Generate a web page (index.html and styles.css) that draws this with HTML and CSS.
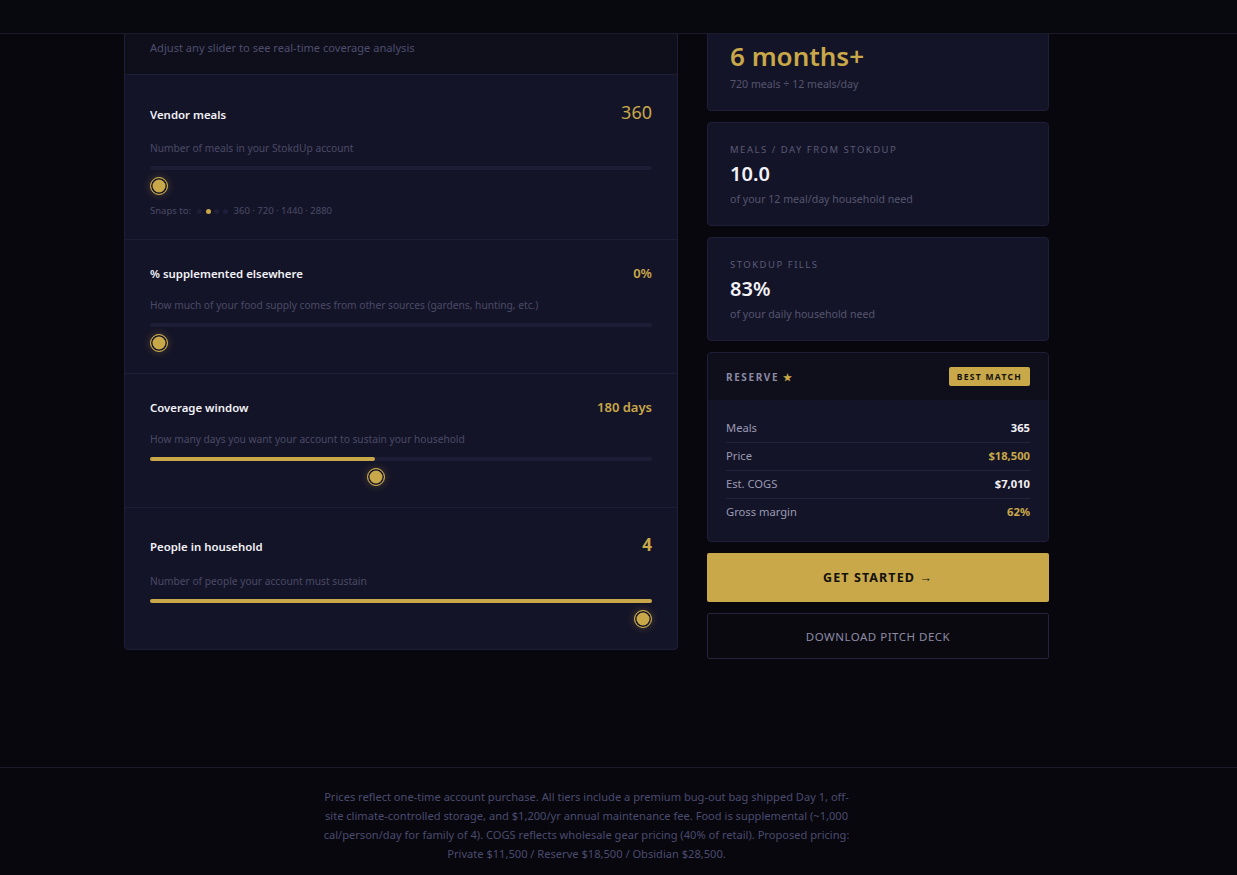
FILE: index.html
```html
<!DOCTYPE html>
<html lang="en">
<head>
    <meta charset="UTF-8">
    <meta name="viewport" content="width=device-width, initial-scale=1.0">
    <title>StokdUp Coverage Calculator</title>
    <link rel="stylesheet" href="styles.css">
</head>
<body>
    <header class="topbar"></header>

    <main class="layout">
        <section class="panel">
            <div class="panel-head">
                <h2 class="panel-title">Coverage calculator</h2>
                <p class="panel-sub">Adjust any slider to see real-time coverage analysis</p>
            </div>

            <div class="control">
                <div class="control-row">
                    <span class="control-label">Vendor meals</span>
                    <span class="control-value value-lg">360</span>
                </div>
                <p class="control-desc">Number of meals in your StokdUp account</p>
                <div class="track"><div class="track-fill" style="width:0%"></div></div>
                <div class="thumb" style="margin-left:calc(0 * (100% - 18px))"></div>
                <div class="snaps">
                    Snaps to:
                    <span class="dots"><i></i><i class="on"></i><i></i><i></i></span>
                    360 · 720 · 1440 · 2880
                </div>
            </div>

            <div class="control">
                <div class="control-row">
                    <span class="control-label">% supplemented elsewhere</span>
                    <span class="control-value">0%</span>
                </div>
                <p class="control-desc">How much of your food supply comes from other sources (gardens, hunting, etc.)</p>
                <div class="track"><div class="track-fill" style="width:0%"></div></div>
                <div class="thumb" style="margin-left:calc(0 * (100% - 18px))"></div>
            </div>

            <div class="control">
                <div class="control-row">
                    <span class="control-label">Coverage window</span>
                    <span class="control-value">180 days</span>
                </div>
                <p class="control-desc">How many days you want your account to sustain your household</p>
                <div class="track"><div class="track-fill" style="width:44.8%"></div></div>
                <div class="thumb" style="margin-left:calc(0.448 * (100% - 18px))"></div>
            </div>

            <div class="control">
                <div class="control-row">
                    <span class="control-label">People in household</span>
                    <span class="control-value value-lg value-bold">4</span>
                </div>
                <p class="control-desc">Number of people your account must sustain</p>
                <div class="track"><div class="track-fill" style="width:100%"></div></div>
                <div class="thumb" style="margin-left:calc(1 * (100% - 18px))"></div>
            </div>
        </section>

        <aside class="side">
            <div class="stat">
                <div class="stat-label">Estimated coverage</div>
                <div class="stat-value stat-gold">6 months+</div>
                <div class="stat-sub">720 meals ÷ 12 meals/day</div>
            </div>

            <div class="stat">
                <div class="stat-label">Meals / day from StokdUp</div>
                <div class="stat-value">10.0</div>
                <div class="stat-sub">of your 12 meal/day household need</div>
            </div>

            <div class="stat">
                <div class="stat-label">StokdUp fills</div>
                <div class="stat-value">83%</div>
                <div class="stat-sub">of your daily household need</div>
            </div>

            <div class="tier">
                <div class="tier-head">
                    <span class="tier-name">RESERVE <span class="star">★</span></span>
                    <span class="badge">BEST MATCH</span>
                </div>
                <div class="tier-body">
                    <div class="tier-row"><span>Meals</span><b>365</b></div>
                    <div class="tier-row"><span>Price</span><b class="gold">$18,500</b></div>
                    <div class="tier-row"><span>Est. COGS</span><b>$7,010</b></div>
                    <div class="tier-row"><span>Gross margin</span><b class="gold">62%</b></div>
                </div>
            </div>

            <button type="button" class="btn-primary">GET STARTED →</button>
            <button type="button" class="btn-ghost">DOWNLOAD PITCH DECK</button>
        </aside>
    </main>

    <footer class="footer">
        <div class="footer-inner">
            <p>Prices reflect one-time account purchase. All tiers include a premium bug-out bag shipped Day 1, off-site climate-controlled storage, and $1,200/yr annual maintenance fee. Food is supplemental (~1,000 cal/person/day for family of 4). COGS reflects wholesale gear pricing (40% of retail). Proposed pricing: Private $11,500 / Reserve $18,500 / Obsidian $28,500.</p>
        </div>
    </footer>
</body>
</html>
```

FILE: styles.css
```css
body {
    margin: 0;
    background-color: #07070d;
    color: #f0f0f6;
    font-family: "Noto Sans", "Open Sans", sans-serif;
}

/* fixed top bar, content slides under it */
.topbar {
    position: fixed;
    top: 0;
    left: 0;
    right: 0;
    height: 33px;
    background-color: #08080f;
    border-bottom: 1px solid #1b1a2c;
    z-index: 10;
}

.layout {
    display: grid;
    grid-template-columns: 554px 342px;
    gap: 29px;
    align-items: start;
    margin: 1px 0 0 124px;
}

/* left panel */
.panel {
    background-color: #141428;
    border: 1px solid #1f1e36;
    border-radius: 4px;
    overflow: hidden;
}
.panel-head {
    background-color: #0f0f1c;
    border-bottom: 1px solid #1f1e36;
    padding: 9px 25px 18px;
}
.panel-title {
    margin: 0 0 9px;
    font-size: 16px;
    line-height: 20px;
}
.panel-sub {
    margin: 0;
    font-size: 11.1px;
    line-height: 16px;
    color: #4d4d6c;
}

.control {
    padding: 23px 25px 21px;
}
.control + .control {
    border-top: 1px solid #1f1e36;
}
.control-row {
    display: flex;
    justify-content: space-between;
    align-items: baseline;
}
.control-label {
    font-size: 11.4px;
    line-height: 16px;
    font-weight: 600;
    color: #f2f2f7;
}
.control-value {
    font-size: 13px;
    line-height: 20px;
    font-weight: 600;
    color: #c9a84a;
}
.value-lg {
    font-size: 18px;
    line-height: 28px;
    font-weight: 400;
}
.value-bold {
    font-weight: 700;
    font-size: 17px;
}
.control-desc {
    margin: 14px 0 0;
    font-size: 10.2px;
    line-height: 16px;
    color: #4a4a66;
}
.track {
    margin-top: 10px;
    height: 4px;
    background-color: #1e1d36;
    border-radius: 2px;
}
.track-fill {
    height: 100%;
    background-color: #c9a84a;
    border-radius: 2px;
}
.thumb {
    margin-top: 7px;
    width: 18px;
    height: 18px;
    box-sizing: border-box;
    border-radius: 50%;
    border: 1px solid #c9a84a;
    background-color: #c9a84a;
    box-shadow: inset 0 0 0 1.5px #141428, 0 0 8px rgba(201, 168, 74, 0.3);
}
.snaps {
    margin-top: 9px;
    display: flex;
    align-items: center;
    font-size: 9.5px;
    line-height: 14px;
    color: #4a4a66;
}
.dots {
    display: flex;
    gap: 3.5px;
    margin: 0 6px;
}
.dots i {
    width: 5px;
    height: 5px;
    border-radius: 50%;
    background-color: #1f1e3a;
}
.dots i.on {
    background-color: #c9a84a;
}

/* right column */
.side {
    display: flex;
    flex-direction: column;
    gap: 11px;
}
.stat {
    background-color: #141428;
    border: 1px solid #1f1e36;
    border-radius: 4px;
    padding: 20px 22px 19px;
}
.stat-label {
    font-size: 9.5px;
    line-height: 14px;
    letter-spacing: 1.5px;
    text-transform: uppercase;
    color: #5a5a76;
}
.stat-value {
    margin-top: 4px;
    font-size: 20px;
    line-height: 26px;
    font-weight: 600;
    color: #f2f2f7;
}
.stat-gold {
    font-size: 26px;
    line-height: 32px;
    color: #c9a84a;
}
.stat-sub {
    margin-top: 5px;
    font-size: 10.6px;
    line-height: 14px;
    color: #55556f;
}

.tier {
    background-color: #141428;
    border: 1px solid #1f1e36;
    border-radius: 4px;
    overflow: hidden;
}
.tier-head {
    display: flex;
    justify-content: space-between;
    align-items: center;
    height: 47px;
    padding: 0 18px;
    background-color: #0f0f1c;
}
.tier-name {
    font-size: 10px;
    font-weight: 700;
    letter-spacing: 1.6px;
    color: #8a8aa2;
}
.star {
    color: #c9a84a;
    letter-spacing: 0;
}
.badge {
    height: 19px;
    line-height: 19px;
    padding: 0 8px;
    background-color: #c9a84a;
    color: #14120a;
    font-size: 8.5px;
    font-weight: 700;
    letter-spacing: 1.3px;
    border-radius: 2px;
}
.tier-body {
    padding: 15px 18px 15px;
}
.tier-row {
    display: flex;
    justify-content: space-between;
    padding: 5px 0 6px;
    border-bottom: 1px solid #23223a;
    font-size: 11.2px;
    line-height: 16px;
    color: #9a9ab2;
}
.tier-row:last-child {
    border-bottom: none;
}
.tier-row b {
    font-weight: 700;
    color: #f2f2f7;
}
.tier-row b.gold {
    color: #c9a84a;
}

.btn-primary,
.btn-ghost {
    display: block;
    width: 100%;
    font-family: inherit;
    cursor: pointer;
    border-radius: 2px;
}
.btn-primary {
    height: 49px;
    border: none;
    background-color: #c9a84a;
    color: #12110c;
    font-size: 12.5px;
    font-weight: 700;
    letter-spacing: 1.1px;
}
.btn-ghost {
    height: 46px;
    border: 1px solid #24223c;
    background-color: #09090f;
    color: #8d8ba6;
    font-size: 11.5px;
    letter-spacing: 0.5px;
}

/* footer */
.footer {
    margin-top: 108px;
    border-top: 1px solid #1a1a2b;
    padding: 19px 0 20px;
}
.footer-inner {
    width: 925px;
    margin-left: 124px;
}
.footer p {
    max-width: 540px;
    margin: 0 auto;
    text-align: center;
    font-size: 11.1px;
    line-height: 19px;
    color: #4b4b70;
}
```
